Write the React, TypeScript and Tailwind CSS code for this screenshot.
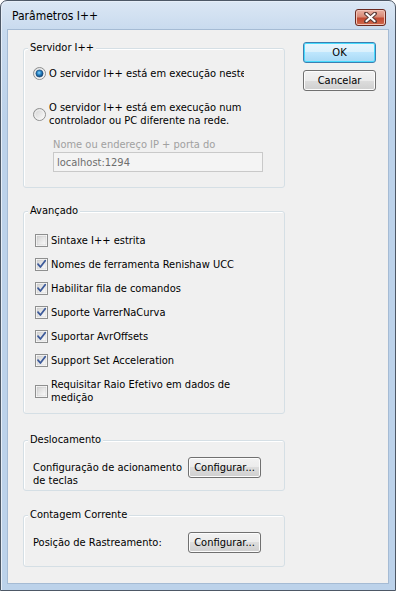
import React from "react";

function Radio({ checked }: { checked: boolean }) {
  return (
    <svg width="13" height="13" viewBox="0 0 13 13" className="shrink-0">
      <defs>
        <linearGradient id={checked ? "rg1" : "rg0"} x1="0" y1="0" x2="1" y2="1">
          <stop offset="0" stopColor="#cfcfcf" />
          <stop offset="1" stopColor="#ffffff" />
        </linearGradient>
        <radialGradient id="rdot" cx="0.45" cy="0.4" r="0.6">
          <stop offset="0" stopColor="#8fd6ff" />
          <stop offset="0.45" stopColor="#2a88c8" />
          <stop offset="1" stopColor="#0f3d6e" />
        </radialGradient>
      </defs>
      <circle cx="6.5" cy="6.5" r="6" fill={`url(#${checked ? "rg1" : "rg0"})`} stroke="#8e8f8f" strokeWidth="1" />
      <circle cx="6.5" cy="6.5" r="4.6" fill="none" stroke="#f4f4f4" strokeWidth="0.8" />
      {checked && <circle cx="6.5" cy="6.5" r="3.6" fill="url(#rdot)" stroke="#1b4a78" strokeWidth="0.6" />}
    </svg>
  );
}

function Check({ checked }: { checked: boolean }) {
  return (
    <svg width="13" height="13" viewBox="0 0 13 13" className="shrink-0">
      <defs>
        <linearGradient id="cbg" x1="0" y1="0" x2="1" y2="1">
          <stop offset="0" stopColor="#d2d2d2" />
          <stop offset="1" stopColor="#fcfcfc" />
        </linearGradient>
      </defs>
      <rect x="0.5" y="0.5" width="12" height="12" fill="#ffffff" stroke="#8e8f8f" />
      <rect x="2" y="2" width="9" height="9" fill="url(#cbg)" stroke="#c4c4c4" strokeWidth="0.5" />
      {checked && (
        <path d="M3 6.2 L5.4 9 L10.2 2.8" fill="none" stroke="#3c5a9a" strokeWidth="1.8" strokeLinejoin="round" strokeLinecap="round" />
      )}
    </svg>
  );
}

function Btn({ children, def }: { children: React.ReactNode; def?: boolean }) {
  return (
    <div
      className={
        def
          ? "shrink-0 w-[73px] h-[21px] rounded-[3px] border border-[#3c7fb1] shadow-[inset_0_0_0_1px_#48dbfd] bg-[linear-gradient(#eaf6fd,#d9f0fc_50%,#bee6fd_50%,#a7d9f5)] flex items-center justify-center"
          : "shrink-0 w-[73px] h-[21px] rounded-[3px] border border-[#707070] shadow-[inset_0_0_0_1px_#fcfcfc] bg-[linear-gradient(#f2f2f2,#ebebeb_50%,#dddddd_50%,#cfcfcf)] flex items-center justify-center"
      }
    >
      <span className="leading-[13px]">{children}</span>
    </div>
  );
}

function Group({ title, className, children }: { title: string; className?: string; children: React.ReactNode }) {
  return (
    <div className={`relative border border-[#d5dfe5] rounded-[3px] shadow-[inset_1px_1px_0_#ffffff] w-[262px] ${className ?? ""}`}>
      <span className="absolute top-[-8px] left-[4px] px-[2px] leading-[13px] bg-[#f0f0f0] whitespace-nowrap">{title}</span>
      {children}
    </div>
  );
}

export default function App() {
  const checks: [string, boolean][] = [
    ["Sintaxe I++ estrita", false],
    ["Nomes de ferramenta Renishaw UCC", true],
    ["Habilitar fila de comandos", true],
    ["Suporte VarrerNaCurva", true],
    ["Suportar AvrOffsets", true],
    ["Support Set Acceleration", true],
  ];
  return (
    <div className="w-[396px] h-[591px] font-['DejaVu_Sans',sans-serif] font-stretch-condensed text-[11px] leading-[13px] text-black">
      <div className="w-full h-full flex flex-col border border-[#4d5866] rounded-t-[7px] bg-[linear-gradient(#dbe7f4,#c8daee_30px,#bcd2ea_120px,#bcd2ea)] shadow-[inset_1px_1px_0_#e6eef8]">
        {/* title bar */}
        <div className="h-[28px] flex items-start justify-between pl-[11px] pr-[9px]">
          <span className="text-[12px] leading-[14px] mt-[8px]">Parâmetros I++</span>
          <div className="mt-[8px] w-[31px] h-[17px] rounded-[3px] border border-[#6b2a20] bg-[linear-gradient(#eab2a4,#d88a77_45%,#c24a32_55%,#cf6a4e)] shadow-[inset_0_0_0_1px_#f0c4b8] flex items-center justify-center">
            <svg width="13" height="11" viewBox="0 0 13 11">
              <path d="M2 1.5 L11 9.5 M11 1.5 L2 9.5" stroke="#5a3a36" strokeWidth="4" strokeLinecap="round" />
              <path d="M2.3 1.8 L10.7 9.2 M10.7 1.8 L2.3 9.2" stroke="#ffffff" strokeWidth="2" strokeLinecap="round" />
            </svg>
          </div>
        </div>
        {/* client */}
        <div className="flex-1 mx-[6px] mb-[6px] border border-[#a5bbd4] bg-[#f0f0f0] flex">
          <div className="pl-[15px] flex flex-col">
            <Group title="Servidor I++" className="mt-[18px]">
              <div className="pt-[18px] pl-[9px] pb-[15px] flex flex-col">
                <div className="flex items-center">
                  <Radio checked />
                  <div className="ml-[3px] w-[195px] overflow-hidden whitespace-nowrap h-[13px]">O servidor I++ está em execução neste PC</div>
                </div>
                <div className="flex items-center mt-[21px]">
                  <Radio checked={false} />
                  <div className="ml-[3px] whitespace-nowrap">
                    O servidor I++ está em execução num
                    <br />
                    controlador ou PC diferente na rede.
                  </div>
                </div>
                <div className="ml-[20px] mt-[11px] text-[#a0a0a0] whitespace-nowrap">Nome ou endereço IP + porta do</div>
                <div className="ml-[20px] mt-[1px] w-[210px] h-[20px] border border-[#c9c9c9] bg-[#f4f4f4] flex items-center pl-[3px] text-[#6d6d6d]">
                  localhost:1294
                </div>
              </div>
            </Group>
            <Group title="Avançado" className="mt-[23px]">
              <div className="pt-[22px] pl-[11px] pb-[9px] flex flex-col gap-[11px]">
                {checks.map(([t, c]) => (
                  <div key={t} className="flex items-center h-[13px]">
                    <Check checked={c} />
                    <span className="ml-[3px] whitespace-nowrap">{t}</span>
                  </div>
                ))}
                <div className="flex items-center">
                  <Check checked={false} />
                  <span className="ml-[3px] whitespace-nowrap">
                    Requisitar Raio Efetivo em dados de
                    <br />
                    medição
                  </span>
                </div>
              </div>
            </Group>
            <Group title="Deslocamento" className="mt-[26px]">
              <div className="pt-[16px] pl-[9px] pb-[3px] flex items-start">
                <div className="w-[155px] mt-[4px] whitespace-nowrap">
                  Configuração de acionamento
                  <br />
                  de teclas
                </div>
                <Btn>Configurar...</Btn>
              </div>
            </Group>
            <Group title="Contagem Corrente" className="mt-[24px]">
              <div className="pt-[16px] pl-[9px] pb-[13px] flex items-start">
                <div className="w-[155px] mt-[4px] whitespace-nowrap">Posição de Rastreamento:</div>
                <Btn>Configurar...</Btn>
              </div>
            </Group>
          </div>
          <div className="ml-[18px] pt-[12px] flex flex-col gap-[7px]">
            <Btn def>OK</Btn>
            <Btn>Cancelar</Btn>
          </div>
        </div>
      </div>
    </div>
  );
}
